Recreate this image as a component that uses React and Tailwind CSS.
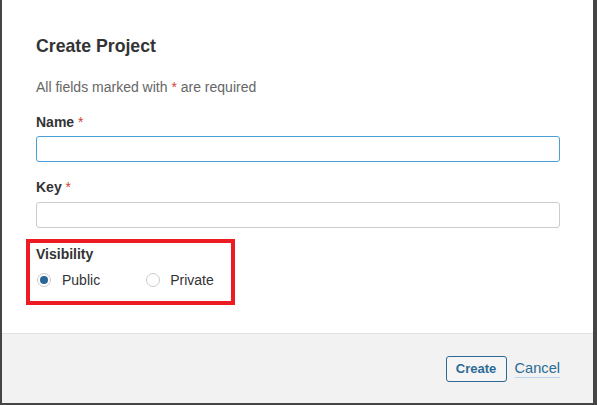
export default function App() {
  return (
    <div
      className="w-[597px] h-[405px] bg-white border-l-2 border-r-4 border-b-2 border-[#454545] flex flex-col text-[#333]"
      style={{ fontFamily: '"Liberation Sans", Arial, sans-serif' }}
    >
      <div className="flex-1 pl-[34px] pr-[33px] pt-[36px]">
        <h2 className="text-[17.7px] leading-[21px] font-bold">Create Project</h2>
        <p className="mt-[20px] text-[14px] leading-[20px] text-[#666]">
          All fields marked with <span className="text-[#d04437]">*</span> are required
        </p>

        <label className="block mt-[15px] text-[14px] leading-[20px] font-bold">
          Name <span className="text-[#d04437] font-normal">*</span>
        </label>
        <input
          className="block mt-[4px] w-full h-[26px] border border-[#4a9fd8] rounded-[3px] outline-none px-2 text-[14px]"
        />

        <label className="block mt-[15px] text-[14px] leading-[20px] font-bold">
          Key <span className="text-[#d04437] font-normal">*</span>
        </label>
        <input
          className="block mt-[5px] w-full h-[26px] border border-[#ccc] rounded-[3px] outline-none px-2 text-[14px]"
        />

        <div className="mt-[11px] -ml-[10px] w-[209px] border-4 border-[#ed1c24] pl-[6px] pt-[1px] pb-[11px]">
          <div className="text-[14px] leading-[20px] font-bold">Visibility</div>
          <div className="mt-[6px] flex items-center text-[14px] leading-[20px]">
            <span className="ml-[1px] w-[14px] h-[14px] rounded-full border border-[#ccc] flex items-center justify-center">
              <span className="w-[8px] h-[8px] rounded-full bg-[#28679a]" />
            </span>
            <span className="ml-[11px]">Public</span>
            <span className="ml-[46px] w-[14px] h-[14px] rounded-full border border-[#ccc]" />
            <span className="ml-[10px]">Private</span>
          </div>
        </div>
      </div>

      <div className="h-[70px] bg-[#f2f2f2] border-t border-[#e3e3e3] flex items-center justify-end pr-[33px]">
        <button className="w-[61px] h-[26px] border border-[#2b6a95] rounded-[3px] text-[#2b6a95] text-[13px] font-bold bg-[#f5f5f5]">
          Create
        </button>
        <a className="ml-[8px] text-[14.6px] text-[#2b6a95] border-b border-[#b9d6ee] leading-[17px]">Cancel</a>
      </div>
    </div>
  );
}
